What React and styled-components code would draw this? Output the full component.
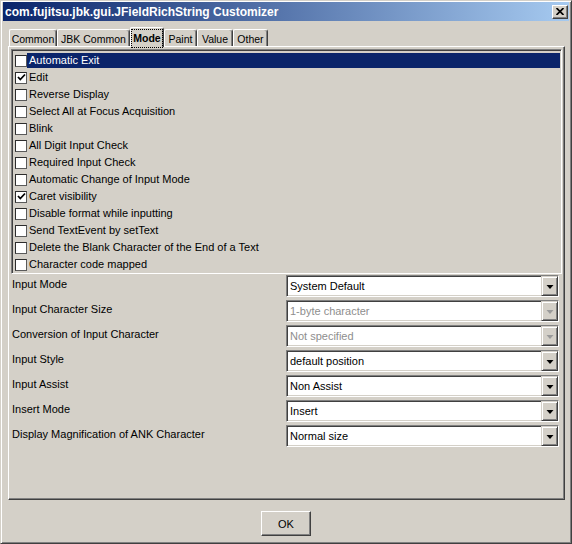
import React from "react";
import styled, { createGlobalStyle } from "styled-components";

const Global = createGlobalStyle`
    html, body {
        margin: 0;
        padding: 0;
        background: #d4d0c8;
    }
    * {
        box-sizing: border-box;
    }
`;

const FACE = "#d4d0c8";
const SHADOW = "#808080";
const DARK = "#404040";

const Frame = styled.div`
    width: 572px;
    height: 544px;
    padding: 1px 2px;
    background: ${FACE};
    border: 1px solid;
    border-color: ${FACE} ${DARK} ${DARK} ${FACE};
    box-shadow: inset 1px 1px #fff, inset -1px -1px ${SHADOW};
    display: flex;
    flex-direction: column;
    font-family: "Liberation Sans", Arial, sans-serif;
    font-size: 11px;
    color: #000;
`;

const TitleBar = styled.div`
    height: 19px;
    display: flex;
    align-items: center;
    justify-content: space-between;
    padding: 0 1px 0 2px;
    background: linear-gradient(to right, #0a246a, #a6caf0);
`;

const TitleText = styled.span`
    color: #fff;
    font-weight: bold;
    font-size: 12px;
    white-space: nowrap;
`;

const CloseButton = styled.div`
    width: 16px;
    height: 14px;
    display: flex;
    align-items: center;
    justify-content: center;
    background: ${FACE};
    border: 1px solid;
    border-color: #fff ${DARK} ${DARK} #fff;
    box-shadow: inset -1px -1px ${SHADOW};
`;

const TabStrip = styled.div`
    margin-top: 6px;
    height: 19px;
    padding-left: 6px;
    display: flex;
    align-items: flex-end;
`;

const Tab = styled.div`
    position: relative;
    width: ${(p) => p.$w}px;
    height: ${(p) => (p.$active ? 20 : 17)}px;
    margin-bottom: ${(p) => (p.$active ? -1 : 0)}px;
    z-index: ${(p) => (p.$active ? 2 : 1)};
    display: flex;
    align-items: center;
    justify-content: center;
    padding-top: 1px;
    background: ${FACE};
    border-top: 1px solid #fff;
    border-left: 1px solid #fff;
    border-right: 1px solid ${DARK};
    border-radius: 2px 3px 0 0;
    box-shadow: inset -1px 0 ${SHADOW};
    font-size: 10.5px;
    font-weight: ${(p) => (p.$active ? "bold" : "normal")};
    white-space: nowrap;
`;

const FocusText = styled.span`
    padding: 2px 1px 3px;
    outline: 1px dotted #000;
    line-height: 12px;
`;

const Panel = styled.div`
    margin: 0 4px 0 5px;
    height: 454px;
    padding: 2px 2px 0 2px;
    border: 1px solid;
    border-color: #fff ${DARK} ${DARK} #fff;
    box-shadow: inset -1px -1px ${SHADOW};
    display: flex;
    flex-direction: column;
`;

const Sunken = styled.div`
    border: 1px solid;
    border-color: ${SHADOW} #fff #fff ${SHADOW};
    box-shadow: inset 1px 1px ${DARK}, inset -1px -1px ${FACE};
`;

const CheckList = styled(Sunken)`
    height: 225px;
    padding: 2px 1px 0 1px;
    display: flex;
    flex-direction: column;
`;

const CheckRow = styled.div`
    height: 17px;
    display: flex;
    align-items: center;
    padding-left: 2px;
`;

const Box = styled.div`
    width: 12px;
    height: 12px;
    flex: none;
    background: #fff;
    border: 1px solid #2c2c2c;
    border-right-color: #5a5a5a;
    border-bottom-color: #5a5a5a;
    display: flex;
    align-items: center;
    justify-content: center;
`;

const CheckLabel = styled.div`
    flex: 1;
    height: 15px;
    line-height: 15px;
    padding-left: 2px;
    white-space: nowrap;
    background: ${(p) => (p.$selected ? "#0a246a" : "transparent")};
    color: ${(p) => (p.$selected ? "#fff" : "#000")};
`;

const FieldGrid = styled.div`
    margin-top: 1px;
    padding: 0 3px 0 1px;
    display: grid;
    grid-template-columns: 274px 273px;
    grid-auto-rows: 22px;
    row-gap: 3px;
`;

const FieldLabel = styled.div`
    padding-top: 2px;
    line-height: 14px;
    white-space: nowrap;
`;

const Combo = styled(Sunken)`
    display: flex;
    align-items: stretch;
    background: #fff;
`;

const ComboText = styled.div`
    flex: 1;
    padding: 1px 0 0 3px;
    line-height: 18px;
    white-space: nowrap;
    color: ${(p) => (p.$disabled ? "#8e8e8e" : "#000")};
`;

const ArrowButton = styled.div`
    width: 17px;
    flex: none;
    display: flex;
    align-items: center;
    justify-content: center;
    padding-top: 1px;
    background: ${FACE};
    border: 1px solid;
    border-color: ${FACE} ${DARK} ${DARK} ${FACE};
    box-shadow: inset 1px 1px #fff, inset -1px -1px ${SHADOW};
`;

const Footer = styled.div`
    padding-top: 11px;
    display: flex;
    justify-content: center;
`;

const Button = styled.div`
    width: 50px;
    height: 25px;
    display: flex;
    align-items: center;
    justify-content: center;
    background: ${FACE};
    border: 1px solid;
    border-color: #fff ${DARK} ${DARK} #fff;
    box-shadow: inset -1px -1px ${SHADOW};
    font-size: 11px;
`;

const tabs = [
    { label: "Common", w: 48 },
    { label: "JBK Common", w: 73 },
    { label: "Mode", w: 34, active: true },
    { label: "Paint", w: 33 },
    { label: "Value", w: 36 },
    { label: "Other", w: 35 },
];

const checks = [
    { label: "Automatic Exit", selected: true },
    { label: "Edit", checked: true },
    { label: "Reverse Display" },
    { label: "Select All at Focus Acquisition" },
    { label: "Blink" },
    { label: "All Digit Input Check" },
    { label: "Required Input Check" },
    { label: "Automatic Change of Input Mode" },
    { label: "Caret visibility", checked: true },
    { label: "Disable format while inputting" },
    { label: "Send TextEvent by setText" },
    { label: "Delete the Blank Character of the End of a Text" },
    { label: "Character code mapped" },
];

const fields = [
    { label: "Input Mode", value: "System Default" },
    { label: "Input Character Size", value: "1-byte character", disabled: true },
    { label: "Conversion of Input Character", value: "Not specified", disabled: true },
    { label: "Input Style", value: "default position" },
    { label: "Input Assist", value: "Non Assist" },
    { label: "Insert Mode", value: "Insert" },
    { label: "Display Magnification of ANK Character", value: "Normal size" },
];

const Tick = () => (
    <svg width="9" height="9" viewBox="0 0 9 9">
        <polyline points="1,4 3.3,6.5 8,1.5" fill="none" stroke="#000" strokeWidth="1.8" />
    </svg>
);

const DownArrow = ({ disabled }) => (
    <svg width="8" height="4" viewBox="0 0 8 4">
        <polygon points="0.5,0 7.5,0 4,4" fill={disabled ? "#9a9a9a" : "#000"} />
    </svg>
);

const CloseGlyph = () => (
    <svg width="8" height="7" viewBox="0 0 8 7">
        <path d="M0.5 0 L7.5 7 M7.5 0 L0.5 7" stroke="#000" strokeWidth="1.7" />
    </svg>
);

export default function App() {
    return (
        <>
            <Global />
            <Frame>
                <TitleBar>
                    <TitleText>com.fujitsu.jbk.gui.JFieldRichString Customizer</TitleText>
                    <CloseButton>
                        <CloseGlyph />
                    </CloseButton>
                </TitleBar>

                <TabStrip>
                    {tabs.map((t) => (
                        <Tab key={t.label} $w={t.w} $active={t.active}>
                            {t.active ? <FocusText>{t.label}</FocusText> : t.label}
                        </Tab>
                    ))}
                </TabStrip>

                <Panel>
                    <CheckList>
                        {checks.map((c) => (
                            <CheckRow key={c.label}>
                                <Box>{c.checked && <Tick />}</Box>
                                <CheckLabel $selected={c.selected}>{c.label}</CheckLabel>
                            </CheckRow>
                        ))}
                    </CheckList>

                    <FieldGrid>
                        {fields.map((f) => (
                            <React.Fragment key={f.label}>
                                <FieldLabel>{f.label}</FieldLabel>
                                <Combo>
                                    <ComboText $disabled={f.disabled}>{f.value}</ComboText>
                                    <ArrowButton>
                                        <DownArrow disabled={f.disabled} />
                                    </ArrowButton>
                                </Combo>
                            </React.Fragment>
                        ))}
                    </FieldGrid>
                </Panel>

                <Footer>
                    <Button>OK</Button>
                </Footer>
            </Frame>
        </>
    );
}
